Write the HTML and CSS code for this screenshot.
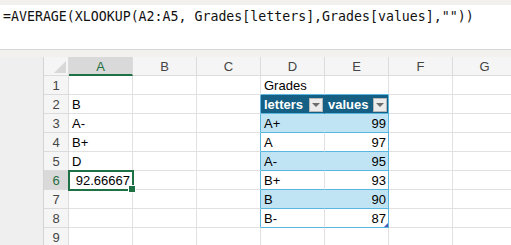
FILE: index.html
```html
<!DOCTYPE html>
<html lang="en">
<head>
  <meta charset="UTF-8" />
  <title>Grades</title>
  <link rel="stylesheet" href="styles.css" />
</head>
<body>

<div class="formula-bar">
  <div class="formula">=AVERAGE(XLOOKUP(A2:A5, Grades[letters],Grades[values],""))</div>
</div>

<div class="sheet">
  <div class="gutter"></div>
  <div class="grid">
    <!-- encabezados -->
    <div class="hd corner"><span class="tri"></span></div>
    <div class="hd col active">A</div>
    <div class="hd col">B</div>
    <div class="hd col">C</div>
    <div class="hd col">D</div>
    <div class="hd col">E</div>
    <div class="hd col">F</div>
    <div class="hd col">G</div>

    <!-- fila 1 -->
    <div class="hd row">1</div>
    <div class="c"></div><div class="c"></div><div class="c"></div>
    <div class="c tb-top">Grades</div><div class="c tb-top"></div>
    <div class="c"></div><div class="c"></div>

    <!-- fila 2 -->
    <div class="hd row">2</div>
    <div class="c">B</div><div class="c"></div><div class="c tl"></div>
    <div class="c t th">letters<span class="dd"></span></div>
    <div class="c t tr th">values<span class="dd"></span></div>
    <div class="c"></div><div class="c"></div>

    <!-- fila 3 -->
    <div class="hd row">3</div>
    <div class="c">A-</div><div class="c"></div><div class="c tl"></div>
    <div class="c t band">A+</div><div class="c t tr band num">99</div>
    <div class="c"></div><div class="c"></div>

    <!-- fila 4 -->
    <div class="hd row">4</div>
    <div class="c">B+</div><div class="c"></div><div class="c tl"></div>
    <div class="c t">A</div><div class="c t tr num">97</div>
    <div class="c"></div><div class="c"></div>

    <!-- fila 5 -->
    <div class="hd row">5</div>
    <div class="c">D</div><div class="c"></div><div class="c tl"></div>
    <div class="c t band">A-</div><div class="c t tr band num">95</div>
    <div class="c"></div><div class="c"></div>

    <!-- fila 6 -->
    <div class="hd row active">6</div>
    <div class="c num sel">92.66667</div><div class="c"></div><div class="c tl"></div>
    <div class="c t">B+</div><div class="c t tr num">93</div>
    <div class="c"></div><div class="c"></div>

    <!-- fila 7 -->
    <div class="hd row">7</div>
    <div class="c"></div><div class="c"></div><div class="c tl"></div>
    <div class="c t band">B</div><div class="c t tr band num">90</div>
    <div class="c"></div><div class="c"></div>

    <!-- fila 8 -->
    <div class="hd row">8</div>
    <div class="c"></div><div class="c"></div><div class="c tl"></div>
    <div class="c t">B-</div><div class="c t tr num last">87</div>
    <div class="c"></div><div class="c"></div>

    <!-- fila 9 -->
    <div class="hd row">9</div>
    <div class="c"></div><div class="c"></div><div class="c"></div>
    <div class="c"></div><div class="c"></div>
    <div class="c"></div><div class="c"></div>
  </div>
</div>

</body>
</html>
```

FILE: styles.css
```css
* {
  box-sizing: border-box;
  margin: 0;
  padding: 0;
}

html, body {
  width: 511px;
  height: 245px;
  overflow: hidden;
  background: #f3f1ee;
  font-family: 'Liberation Sans', Arial, sans-serif;
}

.formula-bar {
  margin-top: 5px;
  margin-bottom: 7px;
  height: 45px;
  background: #ffffff;
  border-bottom: 1px solid #d6d6d6;
  padding: 4px 0 0 3px;
}

.formula {
  font-family: 'DejaVu Sans Mono', monospace;
  font-size: 13.25px;
  line-height: 16px;
  color: #111;
  white-space: nowrap;
}

.sheet {
  display: flex;
  height: 188px;
  background: #ffffff;
}

.gutter {
  width: 44px;
  flex: none;
  background: #efefef;
  border-right: 1px solid #d4d4d4;
}

.grid {
  display: grid;
  grid-template-columns: 25px repeat(7, 64px);
  grid-template-rows: repeat(10, 19px);
  flex: none;
}

/* encabezados */
.hd {
  display: flex;
  align-items: center;
  justify-content: center;
  background: #f5f5f5;
  color: #444;
  font-size: 13px;
  padding-top: 1px;
  border-right: 1px solid #dcdcdc;
  border-bottom: 1px solid #dcdcdc;
}

.hd.corner {
  justify-content: flex-end;
  align-items: flex-end;
  padding: 0 2px 2px 0;
}

.tri {
  width: 12px;
  height: 12px;
  background: #d8d8d8;
  clip-path: polygon(100% 0, 100% 100%, 0 100%);
}

.hd.col.active {
  background: #d9d9d9;
  color: #1e6e42;
  border-bottom: 2px solid #1e7145;
}

.hd.row.active {
  background: #d9d9d9;
  color: #1e6e42;
}

/* celdas */
.c {
  display: flex;
  align-items: center;
  padding: 1px 3px 0 3px;
  font-size: 13px;
  color: #000;
  white-space: nowrap;
  border-right: 1px solid #e1e1e1;
  border-bottom: 1px solid #e1e1e1;
}

.c.num {
  justify-content: flex-end;
  padding-right: 2px;
}

/* tabla Grades */
.c.tb-top,
.c.t {
  border-bottom-color: #5ab5df;
}

.c.tl,
.c.tr {
  border-right-color: #5ab5df;
}

.c.th {
  background: #165f84;
  color: #ffffff;
  font-weight: 700;
  padding-right: 1px;
  border-right-color: #165f84;
}

.c.tr.th {
  border-right-color: #5ab5df;
}

.c.band {
  background: #c1e4f5;
  border-right-color: #c1e4f5;
}

.c.tr.band {
  border-right-color: #5ab5df;
}

.dd {
  margin-left: auto;
  width: 14px;
  height: 14px;
  background: #ececec;
  border: 1px solid #b8b8b8;
  display: flex;
  align-items: center;
  justify-content: center;
}

.dd::after {
  content: "";
  border-left: 4px solid transparent;
  border-right: 4px solid transparent;
  border-top: 4px solid #6b6b6b;
}

.c.last {
  position: relative;
}

.c.last::after {
  content: "";
  position: absolute;
  right: 0;
  bottom: 0;
  width: 4px;
  height: 4px;
  background: #4f5bb8;
  clip-path: polygon(100% 0, 100% 100%, 0 100%);
}

/* celda seleccionada */
.c.sel {
  position: relative;
  z-index: 2;
  outline: 2px solid #1e7145;
  outline-offset: -1px;
}

.c.sel::after {
  content: "";
  position: absolute;
  right: -4px;
  bottom: -4px;
  width: 6px;
  height: 6px;
  background: #1e7145;
  border: 1px solid #ffffff;
}
```
